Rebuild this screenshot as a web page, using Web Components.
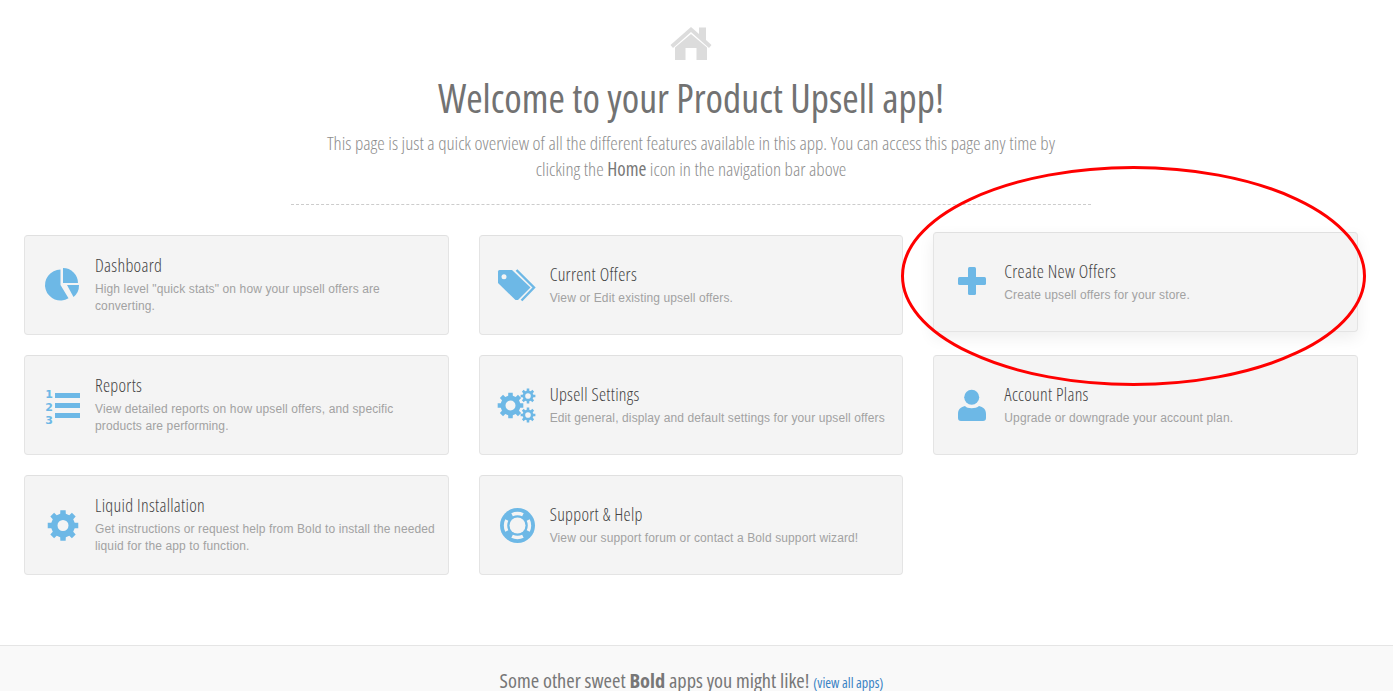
<!DOCTYPE html>
<html lang="en"><head><meta charset="utf-8"><title>Product Upsell</title>
<style>
html,body{margin:0;padding:0;height:691px;overflow:hidden;background:#fff}
body{font-family:"Open Sans",sans-serif;position:relative}
</style></head><body>
<welcome-page>
  <welcome-header slot="header" heading="Welcome to your Product Upsell app!">
    This page is just a quick overview of all the different features available in this app. You can access this page any time by<br>clicking the <b>Home</b> icon in the navigation bar above
  </welcome-header>
  <feature-card heading="Dashboard" text="High level &quot;quick stats&quot; on how your upsell offers are converting."><app-icon name="pie"></app-icon></feature-card>
  <feature-card heading="Current Offers" text="View or Edit existing upsell offers."><app-icon name="tags"></app-icon></feature-card>
  <feature-card raised heading="Create New Offers" text="Create upsell offers for your store."><app-icon name="plus"></app-icon></feature-card>
  <feature-card heading="Reports" text="View detailed reports on how upsell offers, and specific products are performing."><app-icon name="list"></app-icon></feature-card>
  <feature-card heading="Upsell Settings" text="Edit general, display and default settings for your upsell offers"><app-icon name="cogs"></app-icon></feature-card>
  <feature-card heading="Account Plans" text="Upgrade or downgrade your account plan."><app-icon name="user"></app-icon></feature-card>
  <feature-card heading="Liquid Installation" text="Get instructions or request help from Bold to install the needed liquid for the app to function."><app-icon name="cog"></app-icon></feature-card>
  <feature-card heading="Support &amp; Help" text="View our support forum or contact a Bold support wizard!"><app-icon name="buoy"></app-icon></feature-card>
  <apps-footer slot="footer"></apps-footer>
</welcome-page>
<script>
const BLUE='#6db8e6', BG='#f4f4f4';
function gear(cx,cy,R,r,hole,n){
  let d='',st=Math.PI*2/n;
  for(let i=0;i<n;i++){
    const a=i*st-Math.PI/2, w=st*.22, g=st*.3;
    const pts=[[r,a-g],[R,a-w],[R,a+w],[r,a+g]];
    for(const [q,t] of pts){d+=(d?'L':'M')+(cx+q*Math.cos(t)).toFixed(2)+' '+(cy+q*Math.sin(t)).toFixed(2);}
  }
  d+=`Z M${cx-hole} ${cy}a${hole} ${hole} 0 1 0 ${hole*2} 0a${hole} ${hole} 0 1 0 ${-hole*2} 0Z`;
  return `<path fill-rule="evenodd" d="${d}"/>`;
}
const ICONS={
  pie:`<path d="M18.500 4.500V20L26.500 33.300A15.500 15.500 0 1 1 18.500 4.500Z"/><path d="M21 3A15 15 0 0 1 36 18H21Z"/><path d="M25 20H37A15 15 0 0 1 31.500 32Z"/>`,
  tags:`<path d="M2.500 5H15L33.500 22.500 21 35H18.500L1 18V6.500Q1 5 2.500 5Z"/><circle cx="7" cy="11.700" r="2.500" fill="${BG}"/><path d="M19.500 5 37 22.500 24.500 35.500" fill="none" stroke="${BLUE}" stroke-width="2.400"/>`,
  plus:`<rect x="17" y="5" width="8" height="28" rx="1.500"/><rect x="7" y="15" width="28" height="8" rx="1.500"/>`,
  list:`<rect x="13" y="8" width="25" height="5"/><rect x="13" y="18" width="25" height="5"/><rect x="13" y="28" width="25" height="5"/><g font-family="DejaVu Sans" font-weight="700" font-size="11" text-anchor="middle"><text x="7" y="13">1</text><text x="7" y="26">2</text><text x="7" y="39">3</text></g>`,
  cog:gear(21,20.500,15.500,12,5.500,8),
  cogs:gear(13.500,20.500,13,10,5,8)+gear(31,11,7.500,5.500,2.800,8)+gear(31,30,7.500,5.500,2.800,8),
  user:`<circle cx="20.700" cy="12.300" r="7.500"/><path d="M7 33V29C7 24 10 22 14 21C16 24 25 24 28 21C32 22 35 24 35 29V33Q35 36 32 36H10Q7 36 7 33Z"/>`,
  buoy:`<circle cx="20.500" cy="20.500" r="17.500"/><circle cx="20.500" cy="20.500" r="8" fill="${BG}"/><circle cx="20.500" cy="20.500" r="12" fill="none" stroke="${BG}" stroke-width="3.400" pathLength="360" stroke-dasharray="54 36" stroke-dashoffset="27" transform="rotate(-90 20.500 20.500)"/>`
};
class AppIcon extends HTMLElement{connectedCallback(){
  const s=this.shadowRoot||this.attachShadow({mode:'open'});
  s.innerHTML=`<style>:host{display:block;width:40px;height:40px}svg{display:block;overflow:visible;fill:${BLUE}}</style><svg width="40" height="40" viewBox="0 0 40 40" aria-hidden="true">${ICONS[this.getAttribute('name')]}</svg>`;
}}
class FeatureCard extends HTMLElement{connectedCallback(){
  const s=this.shadowRoot||this.attachShadow({mode:'open'});
  s.innerHTML=`<style>
  :host{display:flex;align-items:center;box-sizing:border-box;height:100px;padding:0 8px 0 17px;gap:13px;background:${BG};border:1px solid #e4e4e4;border-top-color:#e0e0e0;border-radius:4px}
  :host([raised]){transform:translateY(-3px);box-shadow:0 6px 16px rgba(0,0,0,.07)}
  .i{flex:none}
  h3{margin:0 0 6px;font:300 18px/20px "Open Sans",sans-serif;font-stretch:75%;letter-spacing:.3px;color:#444}
  p{margin:0;font:12px/17px "Liberation Sans",sans-serif;letter-spacing:.12px;color:#a2a2a2}
  </style><div class="i"><slot></slot></div><div><h3></h3><p></p></div>`;
  s.querySelector('h3').textContent=this.getAttribute('heading');
  s.querySelector('p').textContent=this.getAttribute('text');
}}
class WelcomeHeader extends HTMLElement{connectedCallback(){
  const s=this.shadowRoot||this.attachShadow({mode:'open'});
  s.innerHTML=`<style>
  :host{display:block;text-align:center;padding-top:27px}
  svg{display:block;margin:0 auto;fill:#dcdcdc}
  h1{margin:10px 0 4px;font:400 39.700px/56px "Open Sans",sans-serif;font-stretch:75%;color:#727272}
  .p{font:300 19px/26px "Open Sans",sans-serif;font-stretch:75%;color:#8e8e8e}
  ::slotted(b){color:#777}
  hr{width:800px;margin:22px auto 30px;border:0;border-top:1px dashed #ccc;height:0}
  </style>
  <svg width="42" height="33" viewBox="0 0 42 33" aria-hidden="true"><path d="M21 0 29 7V.5H36V13L41.500 18 39 21 21 5 3 21 .5 18ZM21 7 37 20.500V33H26.500V21H15.500V33H5V20.500Z"/></svg>
  <h1></h1><div class="p"><slot></slot></div><hr>`;
  s.querySelector('h1').textContent=this.getAttribute('heading');
}}
class AppsFooter extends HTMLElement{connectedCallback(){
  const s=this.shadowRoot||this.attachShadow({mode:'open'});
  s.innerHTML=`<style>
  :host{display:block;box-sizing:border-box;height:46px;margin-top:70px;background:#f9f9f9;border-top:1px solid #e5e5e5;padding:24px 10px 0 0;text-align:center;font:400 20.400px/21px "Open Sans",sans-serif;font-stretch:75%;color:#777}
  a{font-size:14px;color:#3a83c4;text-decoration:none}
  </style>Some other sweet <b>Bold</b> apps you might like! <a href="#">(view all apps)</a>`;
}}
class WelcomePage extends HTMLElement{connectedCallback(){
  const s=this.shadowRoot||this.attachShadow({mode:'open'});
  s.innerHTML=`<style>
  :host{display:block;position:relative;height:691px;overflow:hidden}
  .top{width:1382px}
  .grid{display:grid;grid-template-columns:repeat(3,1fr);gap:20px 30px;margin:0 24px}
  .mark{position:absolute;left:900px;top:165px;pointer-events:none}
  </style>
  <div class="top"><slot name="header"></slot><div class="grid"><slot></slot></div></div>
  <slot name="footer"></slot>
  <svg class="mark" width="470" height="224" viewBox="0 0 470 224" aria-hidden="true"><ellipse cx="233.500" cy="111" rx="231" ry="108.500" fill="none" stroke="#f00" stroke-width="3"/></svg>`;
}}
customElements.define('app-icon',AppIcon);
customElements.define('feature-card',FeatureCard);
customElements.define('welcome-header',WelcomeHeader);
customElements.define('apps-footer',AppsFooter);
customElements.define('welcome-page',WelcomePage);
</script>
</body></html>
